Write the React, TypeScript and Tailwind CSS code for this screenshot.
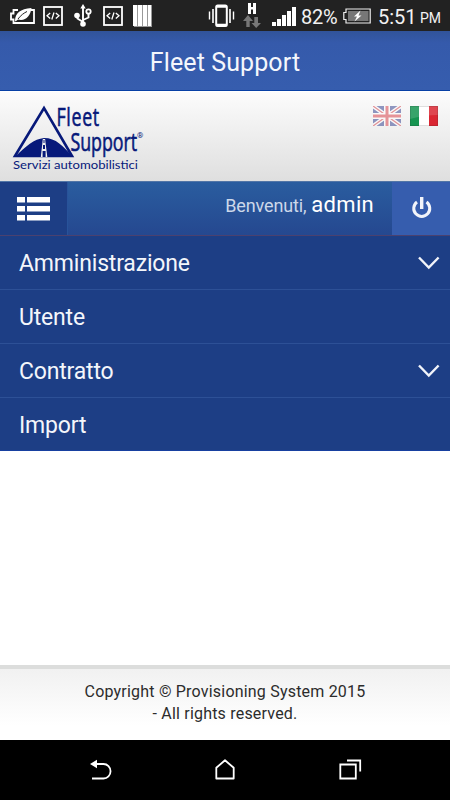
const menuItems = [
  { label: 'Amministrazione', hasChildren: true },
  { label: 'Utente', hasChildren: false },
  { label: 'Contratto', hasChildren: true },
  { label: 'Import', hasChildren: false },
];

const CodeIcon = ({ className }: { className: string }) => (
  <svg width="20" height="20" viewBox="0 0 20 20" fill="none" stroke="#fff" className={className}>
    <rect x="1" y="1" width="18" height="18" strokeWidth="1.8" />
    <path d="M7.2 7 4 9.8l3.2 2.8M12.8 7 16 9.8l-3.2 2.8M11 6.5l-2.2 7" strokeWidth="1.3" />
  </svg>
);

const StatusBar = () => (
  <div className="flex h-[31px] items-center bg-[#222] text-[#f2f2f2]">
    <svg width="25" height="18" viewBox="0 0 25 18" className="ml-[10px]">
      <path d="M8 3H3.5v3.5H1v6h2.5V16H24V3h-3" fill="none" stroke="#fff" strokeWidth="1.8" />
      <path d="M5 13.5C5.500 6 10 2 21.500 1c-1 8-6 13.500-13.500 11.500L5.500 14.500z" fill="#fff" />
      <path d="M8 12c3-4 6-6 9-7.500" fill="none" stroke="#222" strokeWidth="1" />
    </svg>
    <CodeIcon className="ml-[8px]" />
    <svg width="18" height="23" viewBox="0 0 18 23" fill="none" stroke="#fff" className="ml-[11px]">
      <path d="M9 3v18M9 18 3.5 14.5v-3M9 16l5.5-2.5V9" strokeWidth="1.9" />
      <path d="M9 0 6.3 4.5h5.4z" fill="#fff" stroke="none" />
      <circle cx="3" cy="11.500" r="2.800" fill="#fff" stroke="none" />
      <circle cx="14.5" cy="7.5" r="2.200" strokeWidth="1.800" />
      <circle cx="9" cy="20" r="2.8" fill="#fff" stroke="none" />
    </svg>
    <CodeIcon className="ml-[11px]" />
    <svg width="19" height="22" viewBox="0 0 19 22" className="ml-[10px]">
      <path d="M1 0h18v22H1z" fill="#999" />
      <path d="M0 0h4v21H0zM5 0h4v21H5zM10 0h4v21h-4zM15 0h3v21h-3z" fill="#fff" />
    </svg>

    <svg width="27" height="24" viewBox="0 0 27 24" fill="none" stroke="#fff" className="ml-[56px]">
      <rect x="8.2" y="1.5" width="10.6" height="20.5" rx="1.5" strokeWidth="2" />
      <path d="M8 2.5h11M8 21h11" strokeWidth="2.5" />
      <path d="M5 5v14M22 5v14" strokeWidth="1.6" />
      <path d="M1.5 7.5v8M25.5 7.5v8" strokeWidth="1.4" />
    </svg>
    <svg width="19" height="25" viewBox="0 0 19 25" className="ml-[8px]">
      <path d="M5 0h3v4h2V0h3v11h-3V6.500H8V11H5z" fill="#fff" />
      <path d="M5 12 0 18h3.300v6h3.400v-6H10z" fill="#777" />
      <path d="M11.300 14v6H8.500l4.700 5L18 20h-3v-6z" fill="#777" />
    </svg>
    <svg width="25" height="19" viewBox="0 0 25 19" fill="#fff" className="mt-[2px] ml-[10px]">
      <path d="M0 15h4v4H0zM5 12h4v7H5zM10 8h4v11h-4zM15 4h4v15h-4zM20 0h4v19h-4z" />
    </svg>
    <span className="mt-[3px] ml-[4px] w-[38px] text-[20px] leading-[28px] tracking-[-0.3px] whitespace-nowrap">82%</span>
    <svg width="28" height="16" viewBox="0 0 28 16" className="ml-[4px]">
      <path d="M3 1h24.200v14H3v-3.500H.8v-7H3z" fill="#222" stroke="#eee" strokeWidth="1.2" />
      <path d="M5 3h20.500v10H5z" fill="#777" />
      <path d="m17.500 2.500-6.500 6h3L11.500 13.500l7-6h-3z" fill="#fff" />
    </svg>
    <span className="mt-[3px] ml-[7px] w-[37px] text-[20px] leading-[28px] whitespace-nowrap">5:51</span>
    <span className="mt-[5px] ml-[5px] text-[14px] leading-[26px]">PM</span>
  </div>
);

const Logo = () => (
  <svg width="140" height="76" viewBox="0 0 140 76" className="mt-[12px] ml-[10px]" fill="#07197a">
    <path d="M5 52 34 4l28 48z" fill="none" stroke="#07197a" strokeWidth="2.6" />
    <path d="M5 53C16 42 24 35 34 34c12 0 19 8 29 19z" />
    <path d="m32.800 35-2 18h6.500l-2.200-18z" fill="#f0f0f0" />
    <path d="M33.500 36v3h1v-3zM33 41v4h2v-4zM32.600 47v6h3v-6z" />
    <g fontFamily="'Open Sans', sans-serif" fontSize="25.500" fontWeight="500" stroke="#07197a" strokeWidth="0.6">
      <text transform="translate(46.500 21.500) scale(.7 1)" textLength="61" lengthAdjust="spacing">Fleet</text>
      <text transform="translate(60.500 46.500) scale(.7 1)" textLength="95" lengthAdjust="spacing">Support</text>
    </g>
    <text x="127" y="34" fontSize="8" fontFamily="Roboto, sans-serif">®</text>
    <text x="3" y="65" fontSize="12" textLength="125" lengthAdjust="spacingAndGlyphs" fontFamily="Lato, sans-serif">Servizi automobilistici</text>
  </svg>
);

const Flags = () => (
  <div className="mt-[14px] mr-[12px] flex gap-[9px]">
    <svg width="28" height="20" viewBox="0 0 28 20" className="opacity-50">
      <path d="M0 0h28v20H0z" fill="#28378a" />
      <path d="m0 0 28 20M28 0 0 20" stroke="#fff" strokeWidth="4" />
      <path d="m0 0 28 20M28 0 0 20" stroke="#d0353e" strokeWidth="1.3" />
      <path d="M14 0v20M0 10h28" stroke="#fff" strokeWidth="6" />
      <path d="M14 0v20M0 10h28" stroke="#d8353e" strokeWidth="3" />
    </svg>
    <svg width="28" height="20" viewBox="0 0 28 20">
      <path d="M0 0h28v20H0z" fill="#fff" />
      <path d="M0 0h9v20H0z" fill="#169450" />
      <path d="M19 0h9v20h-9z" fill="#da2632" />
      <path d="M0 0h28v9Q14 9 0 13z" fill="#fff" opacity=".15" />
      <path d="M.5.5h27v19H.5z" fill="none" stroke="#222" opacity=".15" />
    </svg>
  </div>
);

const Toolbar = () => (
  <div className="flex h-[55px] border-t border-b border-t-[#5276a7] border-b-[#4b416f] bg-linear-to-b from-[#2a5d9f] to-[#254890]">
    <button className="flex w-[68px] items-start border-r border-[#28539a] bg-[#1d3e85] pt-[15px] pl-[17px]">
      <svg width="34" height="24" viewBox="0 0 34 24" fill="#fff">
        <path d="M0 0h8v5.500H0zM10 0h23v5.500H10zM0 9h8v5.500H0zM10 9h23v5.500H10zM0 18h8v5.500H0zM10 18h23v5.500H10z" />
      </svg>
    </button>
    <div className="flex flex-1 items-baseline justify-end pt-[9px] pr-[18px] whitespace-nowrap">
      <span className="text-[18px] tracking-[-0.15px] text-[#ccd8ea]">Benvenuti,</span>
      <span className="ml-[5px] text-[22px] leading-[28px] tracking-[0.3px] text-white">admin</span>
    </div>
    <button className="flex w-[58px] items-start bg-[#365dae] pt-[14px] pl-[19px]">
      <svg width="22" height="24" viewBox="0 0 22 24" fill="none" stroke="#f2f4fa" strokeWidth="3">
        <path d="M6 6a8 8 0 1 0 9.500 0" />
        <path d="M10.700 1v12" strokeWidth="3.4" />
      </svg>
    </button>
  </div>
);

const Menu = () => (
  <nav className="h-[215px] bg-[#1d3e85]">
    {menuItems.map((item) => (
      <div
        key={item.label}
        className="flex h-[54px] items-center justify-between border-b border-[#2d5096] pr-[10px] pl-[19px] last:h-[53px] last:border-[#1740a0]"
      >
        <span className="pt-[3px] text-[23px] leading-[50px] tracking-[-0.18px] text-[#f4f6fb]">{item.label}</span>
        {item.hasChildren && (
          <svg width="22" height="14" viewBox="0 0 22 14" fill="none" stroke="#f2f4fa" strokeWidth="2.4">
            <path d="m1 1.500 9.800 10 9.800-10" />
          </svg>
        )}
      </div>
    ))}
  </nav>
);

const NavigationBar = () => (
  <div className="flex h-[60px] items-center bg-black">
    <svg width="23" height="22" viewBox="0 0 23 22" className="ml-[89px]" fill="none" stroke="#fff" strokeWidth="1.8">
      <path d="M6 5h8.500a7 7.200 0 0 1 0 14.500H3" />
      <path d="m1 5 7-4.200v8.400z" fill="#fff" stroke="none" />
    </svg>
    <svg width="20" height="22" viewBox="0 0 20 22" className="ml-[103px]" fill="none" stroke="#fff" strokeWidth="1.8">
      <path d="M1.300 19.500V8.800L10 1.300l8.700 7.500v10.700z" strokeLinejoin="round" />
    </svg>
    <svg width="23" height="22" viewBox="0 0 23 22" className="ml-[104px]" fill="none" stroke="#fff" strokeWidth="1.8">
      <path d="M1.300 5.500h15.500v14H1.300zM8 1.500h13.200v11" />
    </svg>
  </div>
);

export default function App() {
  return (
    <div className="flex h-[800px] w-[450px] flex-col overflow-hidden bg-white font-[Roboto,sans-serif]">
      <StatusBar />
      <header className="h-[60px] border-b border-[#0740a5] bg-linear-to-b from-[#31549a] via-[#355aab] via-20% to-[#365dae] text-center text-[25px] leading-[63px] tracking-[0.1px] text-[#f5f7fc]">
        Fleet Support
      </header>
      <div className="flex h-[90px] justify-between border-t border-white bg-linear-to-b from-[#fcfcfc] to-[#dfdfdf]">
        <Logo />
        <Flags />
      </div>
      <Toolbar />
      <Menu />
      <main className="flex-1" />
      <footer className="h-[75px] border-t-4 border-[#dcdddc] bg-linear-to-b from-[#f1f1f1] to-white to-80% pt-[12px] text-center text-[16px] leading-[22px] tracking-[0.2px] text-[#2c2c2c]">
        Copyright © Provisioning System 2015
        <br />- All rights reserved.
      </footer>
      <NavigationBar />
    </div>
  );
}
